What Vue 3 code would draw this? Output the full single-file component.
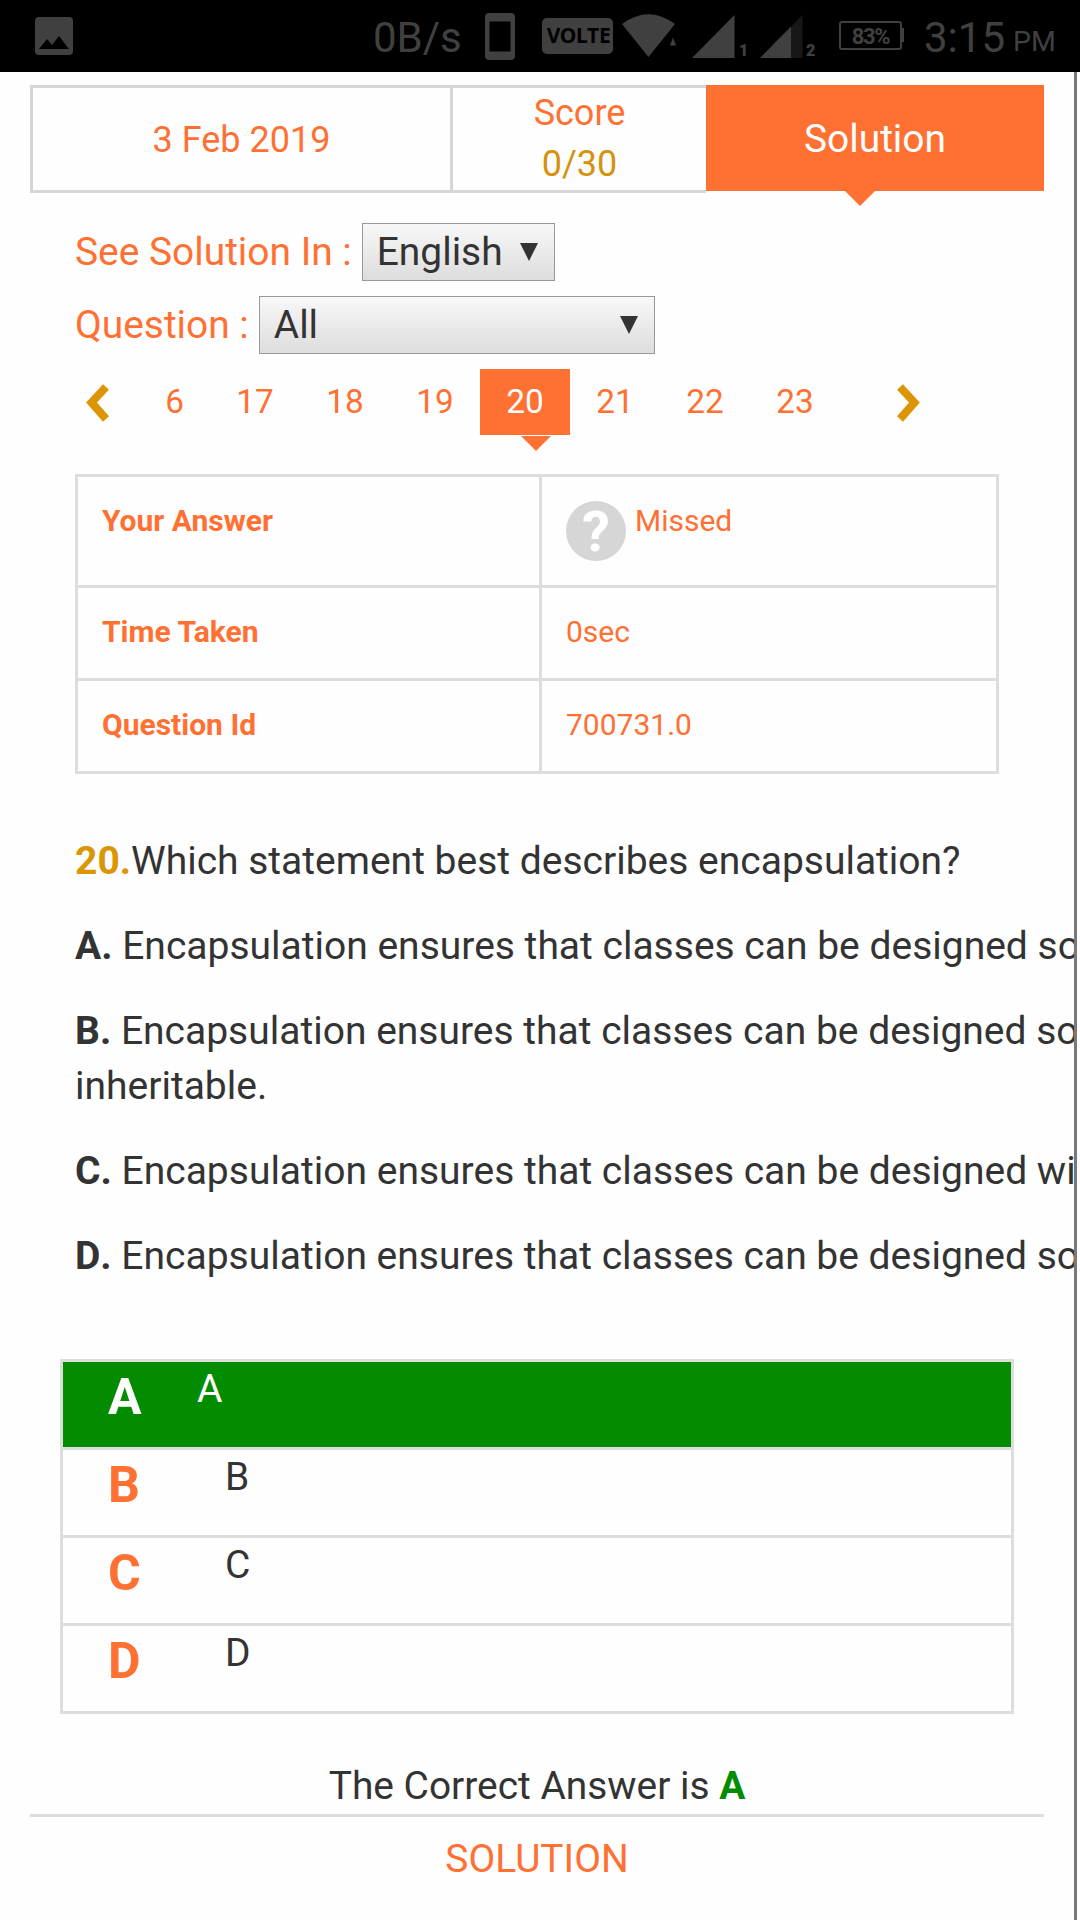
<script setup>
const pages = [
  { n: '6', edge: true },
  { n: '17' },
  { n: '18' },
  { n: '19' },
  { n: '20', active: true },
  { n: '21' },
  { n: '22' },
  { n: '23' },
]
const options = [
  { key: 'A', text: 'Encapsulation ensures that classes can be designed so' },
  { key: 'B', text: 'Encapsulation ensures that classes can be designed so', rest: 'inheritable.' },
  { key: 'C', text: 'Encapsulation ensures that classes can be designed wi' },
  { key: 'D', text: 'Encapsulation ensures that classes can be designed so' },
]
const answers = ['A', 'B', 'C', 'D']
</script>

<template>
  <div class="screen">
    <header class="status">
      <svg class="pic" width="38" height="38" viewBox="0 0 38 38">
        <rect width="38" height="38" rx="4" fill="#404040" />
        <path d="M4 32 12 22l5 6 7-9 10 13z" fill="#000" />
      </svg>
      <span class="speed">0B/s</span>
      <svg class="phone" width="30" height="48" viewBox="0 0 30 48">
        <path fill="#404040" fill-rule="evenodd" d="M4 0h22q4 0 4 4v39q0 4-4 4H4q-4 0-4-4V4q0-4 4-4zM4.500 8.500v30h21v-30z" />
      </svg>
      <span class="volte">VOLTE</span>
      <svg class="wifi" width="56" height="44" viewBox="0 0 56 44">
        <path d="M0 10Q26.500-9.500 53 10L26.500 43z" fill="#404040" />
        <path d="M48 31.500 51 23.500l3 8z" fill="#404040" />
      </svg>
      <svg class="sig" width="43" height="43" viewBox="0 0 43 43"><path d="M0 43 42.500 0V43z" fill="#404040" /></svg>
      <span class="sim one">1</span>
      <svg class="sig" width="43" height="43" viewBox="0 0 43 43">
        <path d="M0 43 42.500 0V43z" fill="#171717" />
        <path d="M0 43 31 11.600V43z" fill="#404040" />
      </svg>
      <span class="sim two">2</span>
      <span class="battery">83%</span>
      <span class="nub"></span>
      <span class="clock">3:15</span>
      <span class="pm">PM</span>
    </header>

    <main class="view">
      <nav class="tabs">
        <div class="tab date">3 Feb 2019</div>
        <div class="tab score"><span>Score</span><b>0/30</b></div>
        <div class="tab solution">Solution</div>
      </nav>

      <div class="field first">
        <label>See Solution In :</label>
        <div class="select lang"><span>English</span><i class="caret"></i></div>
      </div>
      <div class="field">
        <label>Question :</label>
        <div class="select all"><span>All</span><i class="caret"></i></div>
      </div>

      <div class="pager">
        <svg class="prev" width="24" height="38" viewBox="0 0 24 38"><path d="M20 3 5.500 18.500 20 35" fill="none" stroke="#dc9503" stroke-width="8" /></svg>
        <div class="pages">
          <span v-for="p in pages" :key="p.n" class="page" :class="{ active: p.active, edge: p.edge }">{{ p.n }}</span>
        </div>
        <svg width="24" height="38" viewBox="0 0 24 38"><path d="M3 3 17.500 18.500 3 35" fill="none" stroke="#dc9503" stroke-width="8" /></svg>
      </div>

      <div class="info">
        <div class="row tall">
          <div class="name">Your Answer</div>
          <div class="value missed"><span class="badge">?</span><span>Missed</span></div>
        </div>
        <div class="row"><div class="name">Time Taken</div><div class="value">0sec</div></div>
        <div class="row"><div class="name">Question Id</div><div class="value">700731.0</div></div>
      </div>

      <section class="question">
        <p><b class="num">20.</b>Which statement best describes encapsulation?</p>
        <p v-for="o in options" :key="o.key"><b>{{ o.key }}.</b> {{ o.text }}<template v-if="o.rest"><br />{{ o.rest }}</template></p>
      </section>

      <div class="answers">
        <div v-for="a in answers" :key="a" class="answer" :class="{ right: a === 'A' }">
          <b>{{ a }}</b><span>{{ a }}</span>
        </div>
      </div>

      <div class="correct">The Correct Answer is <b>A</b></div>
      <div class="foot">SOLUTION</div>
    </main>
  </div>
</template>

<style>
body { background: #fff; }
</style>

<style scoped>
.screen {
  width: 1080px;
  height: 1920px;
  overflow: hidden;
  background: #fefefe;
  font-family: Roboto, "Liberation Sans", sans-serif;
  font-size: 38.9px;
  line-height: 55px;
  color: #333;
  white-space: nowrap;
}
.screen * { box-sizing: border-box; }

.status {
  display: flex;
  align-items: flex-start;
  height: 72px;
  background: #000;
  color: #404040;
}
.status > * { flex: none; }
.pic { margin: 17px 0 0 35px; }
.speed { width: 112px; margin: 8px 0 0 300px; font-size: 42px; line-height: 60px; }
.phone { margin-top: 13px; }
.volte {
  width: 71px;
  height: 36px;
  margin: 18px 0 0 27px;
  padding-left: 2px;
  border-radius: 5px;
  background: #404040;
  color: #000;
  font-family: "Noto Sans", sans-serif;
  font-size: 21px;
  font-weight: 700;
  line-height: 35px;
  text-align: center;
  letter-spacing: -0.3px;
}
.wifi { margin: 14px 0 0 9px; }
.sig { margin: 15px 0 0 14px; }
.sim { width: 12px; margin-top: 42px; font-size: 16px; font-weight: 900; line-height: 18px; }
.one { margin-left: 4px; }
.two { margin-left: 3px; }
.sim + .sig { margin-left: 9px; }
.battery {
  width: 63px;
  height: 29px;
  margin: 21px 0 0 21px;
  border: 2px solid #404040;
  border-radius: 3px;
  font-size: 22px;
  font-weight: 700;
  line-height: 28px;
  text-align: center;
  letter-spacing: -1.4px;
}
.nub { width: 2px; height: 14px; margin-top: 28px; background: #404040; }
.clock { width: 89px; margin: 8px 0 0 20px; font-size: 42px; line-height: 60px; }
.pm { margin-top: 12px; font-size: 28.500px; line-height: 60px; }

.view {
  width: 1077px;
  height: 1848px;
  overflow: hidden;
  border-right: 3px solid #797979;
  padding-top: 13px;
}

.tabs { display: flex; width: 1014px; height: 108px; margin-left: 30px; color: #ff7033; }
.tab { display: flex; align-items: center; justify-content: center; border: 3px solid #d6d6d6; }
.date { width: 423px; padding-top: 2px; font-size: 36px; }
.score { flex-direction: column; width: 253px; border-left: 0; border-right: 0; font-size: 36px; line-height: 51px; }
.score b { font-weight: 400; color: #d3920f; }
.solution { position: relative; width: 338px; height: 106px; border: 0; background: #ff7033; color: #fff; }
.solution::after {
  content: "";
  position: absolute;
  left: 139px;
  top: 106px;
  border: 15px solid transparent;
  border-top-color: #ff7033;
  border-bottom: 0;
}

.field { display: flex; align-items: center; height: 58px; margin: 15px 0 0 75px; }
.first { margin-top: 30px; }
.field label, .select span { padding-bottom: 2px; }
.field label { color: #ff7033; }
.select {
  display: flex;
  align-items: center;
  justify-content: space-between;
  height: 58px;
  padding: 0 16px 0 14px;
  border: 1px solid #999;
  background: linear-gradient(#f8f8f8, #ddd);
}
.lang { width: 193px; margin-left: 10px; }
.all { width: 396px; margin-left: 10px; }
.caret { border: 9px solid transparent; border-top: 18px solid #333; border-bottom: 0; }

.pager { display: flex; align-items: flex-start; height: 66px; margin: 15px 0 0 86px; }
.pager svg { margin-top: 15px; }
.pages { display: flex; width: 681px; margin: 0 53px; font-size: 33.300px; line-height: 66px; color: #ff7033; }
.page { flex: none; position: relative; width: 90px; height: 66px; text-align: center; }
.edge { width: 47px; padding-right: 26px; text-align: right; }
.active { background: #ff7033; color: #fff; }
.active::after {
  content: "";
  position: absolute;
  left: 41px;
  top: 67px;
  border: 15px solid transparent;
  border-top-color: #ff7033;
  border-bottom: 0;
}

.info { width: 924px; margin: 39px 0 0 75px; border: 3px solid #ddd; border-bottom: 0; font-size: 30px; line-height: 42px; color: #ff7033; }
.row { display: flex; height: 93px; border-bottom: 3px solid #ddd; }
.tall { height: 111px; }
.name { width: 464px; padding: 23px 0 0 24px; border-right: 3px solid #ddd; font-weight: 700; }
.value { padding: 23px 0 0 24px; }
.missed { display: flex; gap: 9px; }
.badge {
  width: 60px;
  height: 60px;
  margin-top: 1px;
  border-radius: 50%;
  background: #d6d6d6;
  color: #fff;
  font-size: 56px;
  font-weight: 700;
  line-height: 62px;
  text-align: center;
}

.question { margin: 60px 0 0 75px; font-size: 39px; }
.question p { margin: 0 0 30px; }
.question b { font-kerning: none; }
.num { color: #dc9503; }

.answers { width: 954px; margin: 75px 0 0 60px; border: 3px solid #ddd; border-bottom: 0; }
.answer { display: flex; height: 88px; padding-left: 45px; border-bottom: 3px solid #ddd; }
.answer b { width: 117px; font-size: 50px; line-height: 70px; color: #ff7033; }
.answer span { line-height: 53px; }
.right { background: linear-gradient(#038c00, #038c00) padding-box; color: #fff; }
.right b { width: 89px; color: #fff; }

.correct { width: 1014px; height: 59px; margin: 44px 0 0 30px; border-bottom: 3px solid #ddd; text-align: center; }
.correct b { color: #038c00; }
.foot { width: 1014px; margin: 14px 0 0 30px; color: #ff7033; text-align: center; }
</style>
